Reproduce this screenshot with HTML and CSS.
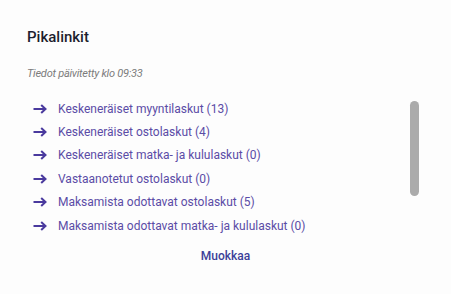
FILE: index.html
```html
<!DOCTYPE html>
<html lang="fi">
<head>
<meta charset="utf-8">
<title>Pikalinkit</title>
<link rel="stylesheet" href="styles.css">
</head>
<body>
<section class="card">
  <h2 class="title">Pikalinkit</h2>
  <p class="updated">Tiedot päivitetty klo 09:33</p>
  <div class="scroller">
    <ul class="links">
      <li><a href="#"><svg class="arrow" viewBox="0 0 14 10" width="14" height="10"><path d="M0.5 5H12.5M8.2 1L12.5 5L8.2 9"/></svg><span>Keskeneräiset myyntilaskut (13)</span></a></li>
      <li><a href="#"><svg class="arrow" viewBox="0 0 14 10" width="14" height="10"><path d="M0.5 5H12.5M8.2 1L12.5 5L8.2 9"/></svg><span>Keskeneräiset ostolaskut (4)</span></a></li>
      <li><a href="#"><svg class="arrow" viewBox="0 0 14 10" width="14" height="10"><path d="M0.5 5H12.5M8.2 1L12.5 5L8.2 9"/></svg><span>Keskeneräiset matka- ja kululaskut (0)</span></a></li>
      <li><a href="#"><svg class="arrow" viewBox="0 0 14 10" width="14" height="10"><path d="M0.5 5H12.5M8.2 1L12.5 5L8.2 9"/></svg><span>Vastaanotetut ostolaskut (0)</span></a></li>
      <li><a href="#"><svg class="arrow" viewBox="0 0 14 10" width="14" height="10"><path d="M0.5 5H12.5M8.2 1L12.5 5L8.2 9"/></svg><span>Maksamista odottavat ostolaskut (5)</span></a></li>
      <li><a href="#"><svg class="arrow" viewBox="0 0 14 10" width="14" height="10"><path d="M0.5 5H12.5M8.2 1L12.5 5L8.2 9"/></svg><span>Maksamista odottavat matka- ja kululaskut (0)</span></a></li>
    </ul>
    <div class="track"><div class="thumb"></div></div>
  </div>
  <div class="actions"><a href="#" class="edit">Muokkaa</a></div>
</section>
</body>
</html>
```
FILE: styles.css
```css
html, body {
  margin: 0;
  padding: 0;
  background: #fdfdfd;
}
body {
  font-family: Roboto, "Liberation Sans", sans-serif;
  width: 451px;
  height: 294px;
  overflow: hidden;
}
.card {
  padding: 27px 32px 0 27px;
}
.title {
  margin: 0;
  font-size: 15px;
  line-height: 20px;
  font-weight: 500;
  color: #1d1d2e;
}
.updated {
  margin: 20px 0 0;
  font-size: 11px;
  line-height: 14px;
  font-style: italic;
  letter-spacing: -0.25px;
  color: #7b7b7b;
}
.scroller {
  display: flex;
  margin-top: 16px;
  height: 140.4px;
}
.links {
  flex: 1;
  list-style: none;
  margin: 0;
  padding: 0;
}
.links a {
  display: flex;
  align-items: center;
  gap: 11px;
  padding-left: 6px;
  height: 23.4px;
  font-size: 12px;
  color: #5b4ca6;
  text-decoration: none;
  white-space: nowrap;
}
.arrow {
  flex: none;
  fill: none;
  stroke: #4a3a9e;
  stroke-width: 2;
}
.track {
  flex: none;
  width: 9px;
  padding-top: 4px;
}
.thumb {
  height: 95px;
  background: #ababab;
  border-radius: 5px;
}
.actions {
  display: flex;
  justify-content: center;
  margin: 11px 0 0 5px;
}
.edit {
  font-size: 12px;
  line-height: 16px;
  font-weight: 500;
  color: #3c3f98;
  text-decoration: none;
}
```
